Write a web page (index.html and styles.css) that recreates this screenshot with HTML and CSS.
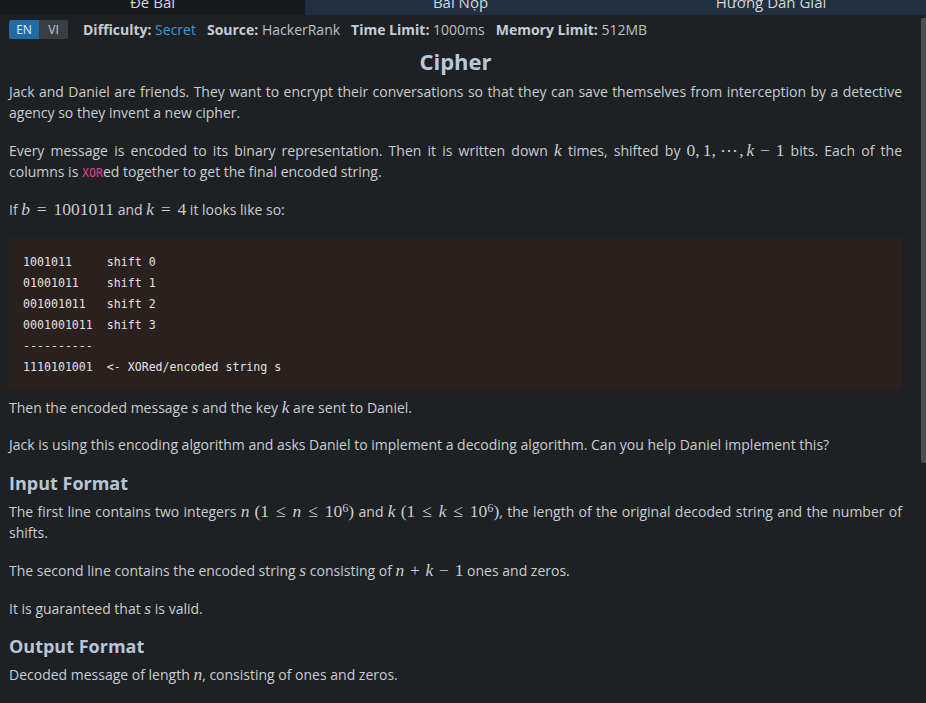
FILE: index.html
```html
<!DOCTYPE html>
<html lang="en">
<head>
<meta charset="utf-8">
<title>Cipher</title>
<link rel="stylesheet" href="styles.css">
</head>
<body>
<div class="tabs">
  <div class="tab tab-1 active">Đề Bài</div>
  <div class="tab tab-2">Bài Nộp</div>
  <div class="tab tab-3">Hướng Dẫn Giải</div>
</div>
<div class="layout">
  <div class="main">
    <div class="meta">
      <div class="lang"><span class="lang-en">EN</span><span class="lang-vi">VI</span></div>
      <div class="meta-item"><b>Difficulty:</b> <span class="secret">Secret</span></div>
      <div class="meta-item"><b>Source:</b> HackerRank</div>
      <div class="meta-item"><b>Time Limit:</b> 1000ms</div>
      <div class="meta-item"><b>Memory Limit:</b> 512MB</div>
    </div>
    <h1 class="title">Cipher</h1>
    <p>Jack and Daniel are friends. They want to encrypt their conversations so that they can save themselves from interception by a detective agency so they invent a new cipher.</p>
    <p>Every message is encoded to its binary representation. Then it is written down <span class="math"><i>k</i></span> times, shifted by <span class="math">0,<span class="sp"></span>1,<span class="sp"></span><span class="cdots">⋯</span>,<span class="sp"></span><i>k</i><span class="bin">−</span>1</span> bits. Each of the columns is <code class="inline">XOR</code>ed together to get the final encoded string.</p>
    <p>If <span class="math"><i>b</i><span class="rel">=</span>1001011</span> and <span class="math"><i>k</i><span class="rel">=</span>4</span> it looks like so:</p>
    <pre class="code">1001011     shift 0
01001011    shift 1
001001011   shift 2
0001001011  shift 3
----------
1110101001  &lt;- XORed/encoded string s</pre>
    <p>Then the encoded message <span class="math"><i>s</i></span> and the key <span class="math"><i>k</i></span> are sent to Daniel.</p>
    <p>Jack is using this encoding algorithm and asks Daniel to implement a decoding algorithm. Can you help Daniel implement this?</p>
    <h3 class="section">Input Format</h3>
    <p>The first line contains two integers <span class="math"><i>n</i> (1<span class="rel">≤</span><i>n</i><span class="rel">≤</span>10<sup>6</sup>)</span> and <span class="math"><i>k</i> (1<span class="rel">≤</span><i>k</i><span class="rel">≤</span>10<sup>6</sup>)</span>, the length of the original decoded string and the number of shifts.</p>
    <p>The second line contains the encoded string <span class="math"><i>s</i></span> consisting of <span class="math"><i>n</i><span class="bin">+</span><i>k</i><span class="bin">−</span>1</span> ones and zeros.</p>
    <p class="last-in-section">It is guaranteed that <span class="math"><i>s</i></span> is valid.</p>
    <h3 class="section">Output Format</h3>
    <p>Decoded message of length <span class="math"><i>n</i></span>, consisting of ones and zeros.</p>
  </div>
  <div class="scrollbar"><div class="thumb"></div></div>
</div>
</body>
</html>
```

FILE: styles.css
```css
html, body {
  margin: 0;
  padding: 0;
}
body {
  background: #1e2124;
  color: #c9cdd1;
  font-family: "Open Sans", "Noto Sans", sans-serif;
  font-size: 14px;
  line-height: 21px;
  overflow: hidden;
  height: 703px;
}
.tabs {
  display: flex;
  height: 25px;
  margin-top: -10px;
}
.tab {
  text-align: center;
  line-height: 25px;
  font-size: 15px;
  color: #d3d7db;
  background: #213040;
}
.tab-1 { width: 305px; }
.tab-2 { width: 311px; }
.tab-3 { flex: 1; }
.tab.active {
  background: #18191b;
}
.layout {
  display: flex;
}
.main {
  flex: 1;
  padding: 0 9px;
  min-width: 0;
}
.scrollbar {
  width: 5px;
  margin-left: 10px;
}
.thumb {
  margin-top: 3px;
  height: 445px;
  background: #4a4e52;
  border-radius: 2px 0 0 2px;
}
.meta {
  display: flex;
  align-items: center;
  margin-top: 5px;
  height: 19px;
}
.lang {
  display: flex;
  margin-right: 15px;
  font-size: 12px;
  line-height: 19px;
}
.lang span {
  width: 30px;
  text-align: center;
}
.lang-en {
  background: #1e6ba6;
  color: #e6edf3;
  border-radius: 2px 0 0 2px;
}
.lang-vi {
  width: 29px !important;
  background: #393e43;
  color: #c7ccd1;
  border-radius: 0 2px 2px 0;
}
.meta-item {
  margin-right: 11px;
  color: #bcc1c6;
}
.meta-item b {
  color: #c3cdd8;
}
.secret {
  color: #3b97dc;
}
.title {
  margin: 8px 0 5px;
  font-size: 22px;
  line-height: 29px;
  text-align: center;
  color: #b8c8d8;
  font-weight: 700;
}
p {
  margin: 0 0 16px;
  text-align: justify;
}
p.last-in-section {
  margin-bottom: 15px;
}
.math {
  font-family: "Liberation Serif", "DejaVu Serif", serif;
  font-size: 17.5px;
  line-height: 22px;
  white-space: nowrap;
}
.math i {
  font-style: italic;
}
.math sup {
  font-size: 0.7em;
  line-height: 0;
  vertical-align: 0.45em;
}
.math .rel {
  display: inline-block;
  width: 0.78em;
  text-align: center;
  margin: 0 0.28em;
}
.math .bin {
  display: inline-block;
  width: 0.78em;
  text-align: center;
  margin: 0 0.22em;
}
.math .cdots {
  display: inline-block;
  width: 1.17em;
  text-align: center;
}
.math .sp {
  display: inline-block;
  width: 0.17em;
}
code.inline {
  font-family: "DejaVu Sans Mono", monospace;
  font-size: 11.6px;
  line-height: 0;
  color: #e8418c;
}
.code {
  margin: 18px 0 6px;
  padding: 14px 14px 12px;
  background: #2a201d;
  color: #e2e2e2;
  font-family: "DejaVu Sans Mono", monospace;
  font-size: 11.6px;
  line-height: 21px;
}
.section {
  margin: 0 0 5px;
  font-size: 18px;
  line-height: 24px;
  color: #b6c6d6;
  font-weight: 700;
}
```
